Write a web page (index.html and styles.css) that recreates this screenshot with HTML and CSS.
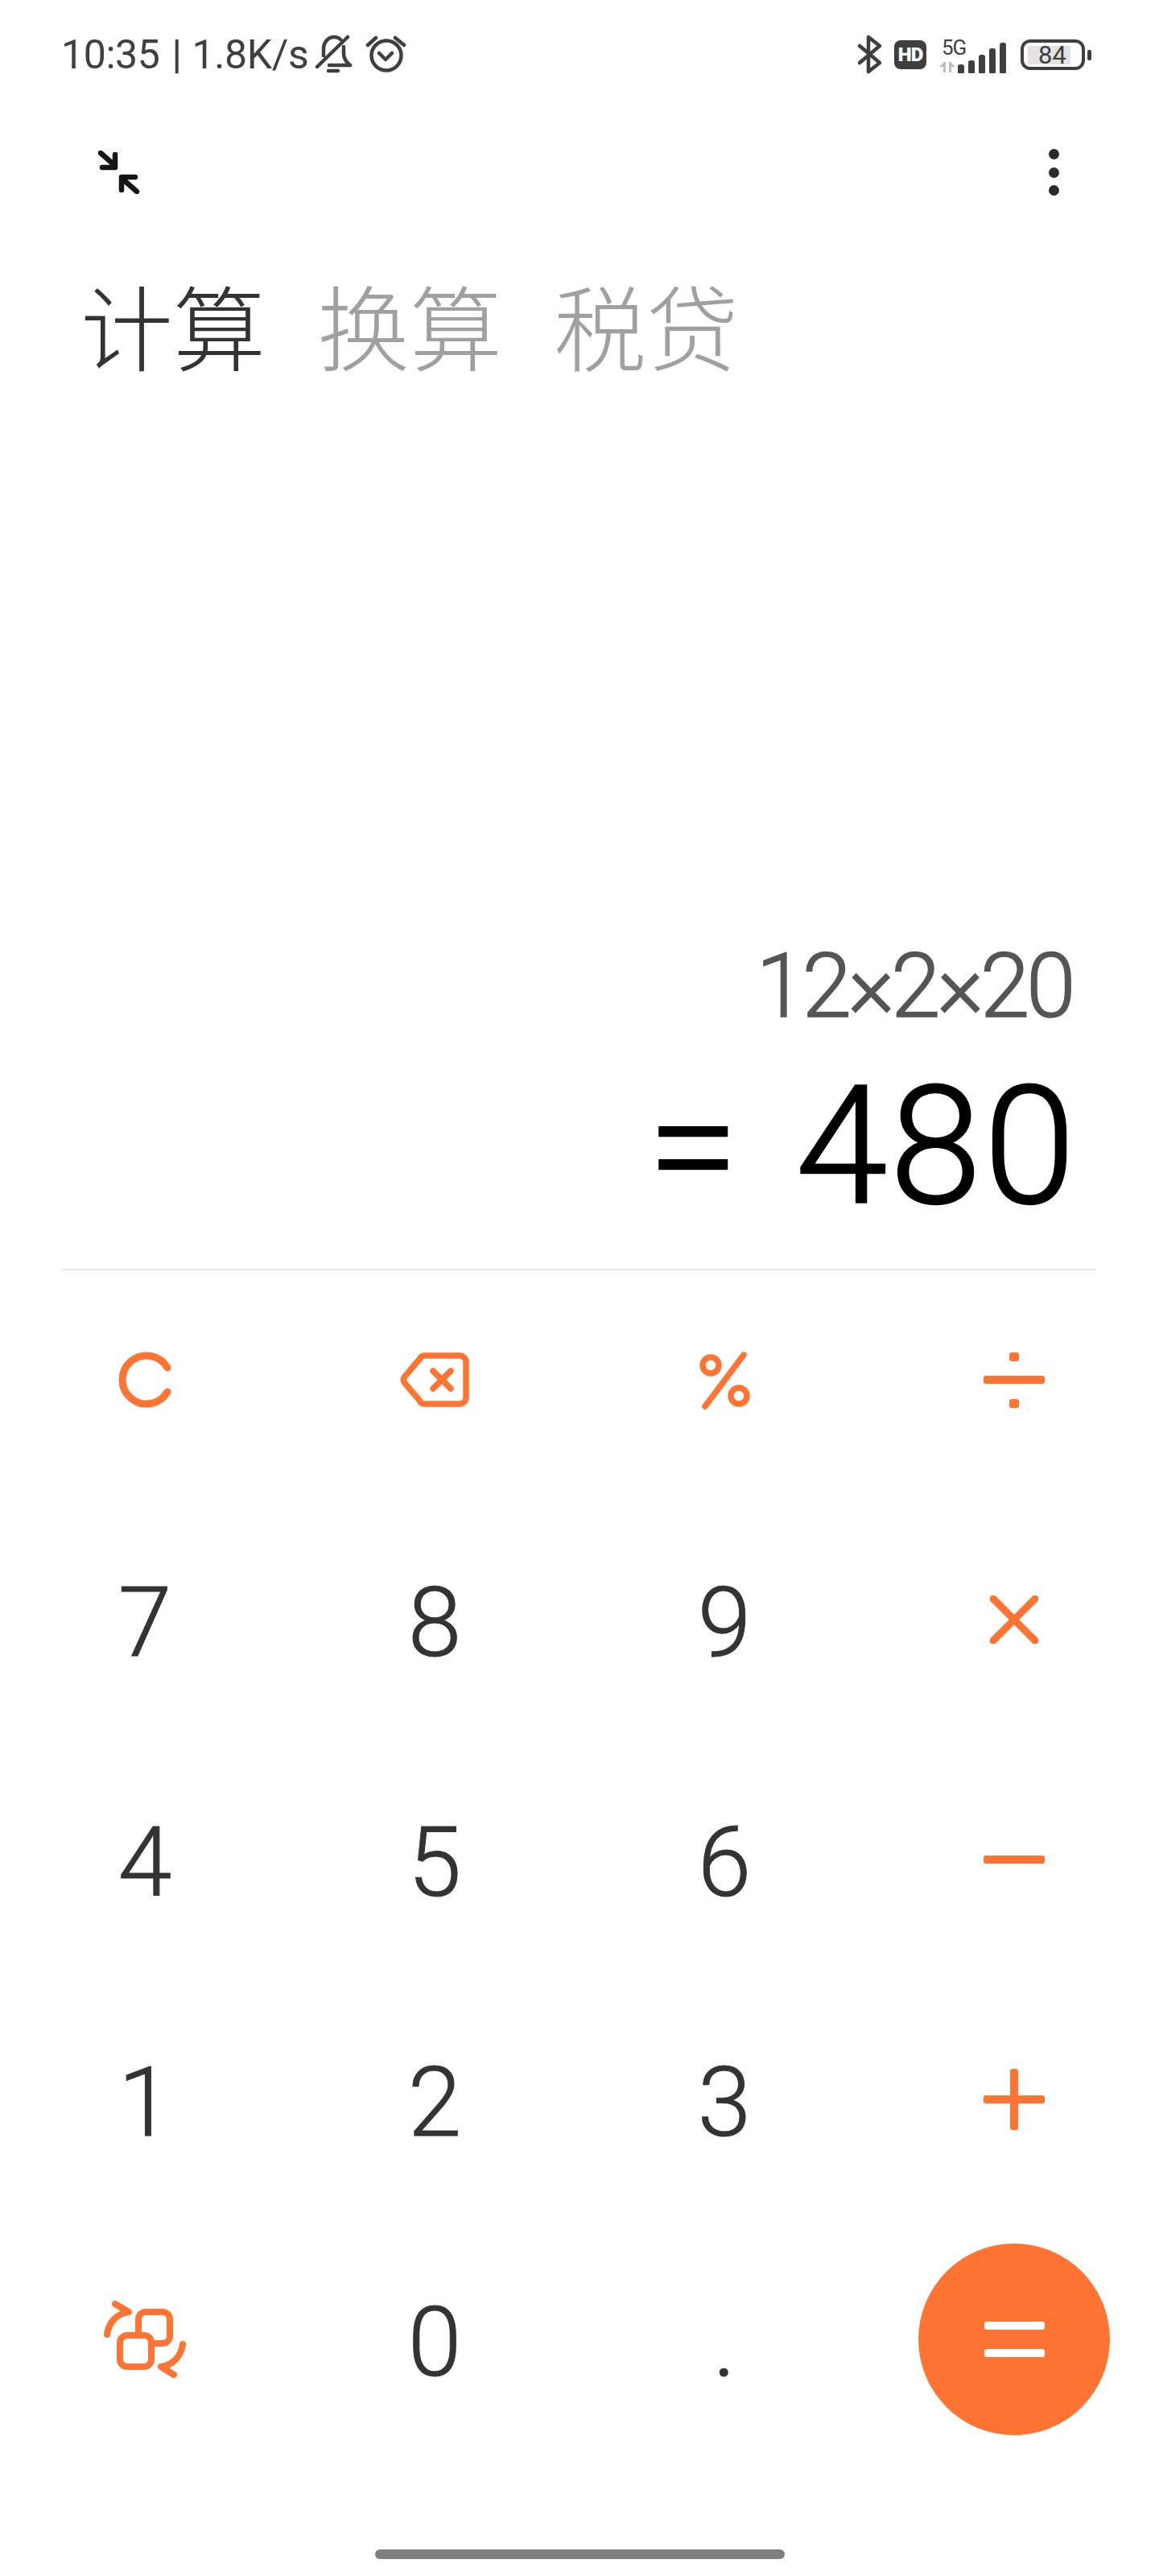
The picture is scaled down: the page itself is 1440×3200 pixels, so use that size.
FILE: index.html
```html
<!DOCTYPE html>
<html lang="zh-CN">
<head>
    <meta charset="UTF-8">
    <title>计算器</title>
    <meta name="viewport" content="width=device-width, initial-scale=1.0">
    <link rel="stylesheet" href="styles.css">
</head>
<body>

<div class="phone">
    <div class="statusbar">
        <div class="status-left">
            <span class="status-text">10:35<span class="status-sep">|</span>1.8K/s</span>
            <svg class="icon-bell" width="48" height="50" viewBox="0 0 48 50">
                <path d="M11 26V18C11 9 17 3 24 3C27 3 30 4 32 6M36 15V24C36 30 39 34 44 38H18M17 45H29M3 40L41 3"/>
            </svg>
            <svg class="icon-alarm" width="52" height="50" viewBox="0 0 52 50">
                <circle cx="26" cy="26" r="18.5"/>
                <path d="M17 23L25 31L33 23M3 13L13 4M37 4L48 13"/>
            </svg>
        </div>
        <div class="status-right">
            <svg class="icon-bt" width="36" height="52" viewBox="0 0 36 52">
                <path d="M5 15L30 36L16 47V4L30 15L5 36"/>
            </svg>
            <div class="hd">HD</div>
            <div class="network">
                <div class="net-type">
                    <span class="five-g">5G</span>
                    <svg width="22" height="16" viewBox="0 0 22 16">
                        <path class="arrow-grey" d="M1 8L7 2H9V15H6V8ZM21 8L15 2H13V15H16V8Z"/>
                    </svg>
                </div>
                <div class="signal">
                    <span class="bar bar-1"></span>
                    <span class="bar bar-2"></span>
                    <span class="bar bar-3"></span>
                    <span class="bar bar-4"></span>
                    <span class="bar bar-5"></span>
                </div>
            </div>
            <div class="battery">
                <div class="battery-body"><span class="battery-level">84</span></div>
                <div class="battery-nub"></div>
            </div>
        </div>
    </div>

    <div class="toolbar">
        <svg class="icon-compress" width="52" height="54" viewBox="0 0 52 54">
            <path d="M3 3L20 18M5 21H21V5"/>
            <path d="M48 51L31 36M29 33H46M29 33V49"/>
        </svg>
        <div class="more">
            <span></span>
            <span></span>
            <span></span>
        </div>
    </div>

    <div class="tabs">
        <div class="tab active">计算</div>
        <div class="tab">换算</div>
        <div class="tab">税贷</div>
    </div>

    <div class="display">
        <div class="expression">12×2×20</div>
        <div class="result"><span class="result-eq">=</span><span class="result-num">480</span></div>
    </div>

    <div class="divider"></div>

    <div class="keypad">
        <button class="key">
            <svg class="op-icon" width="70" height="76" viewBox="0 0 70 76">
                <path d="M63 23A30 30 0 1 0 63 53"/>
            </svg>
        </button>
        <button class="key">
            <svg class="op-icon thin" width="96" height="76" viewBox="0 0 96 76">
                <path d="M35 8H79a8 8 0 0 1 8 8V60a8 8 0 0 1-8 8H35a6 6 0 0 1-5.5-4L10 41a8 8 0 0 1 0-6L29.5 12a6 6 0 0 1 5.5-4z"/>
                <path d="M46 27L68 49M68 27L46 49"/>
            </svg>
        </button>
        <button class="key">
            <svg class="op-icon thin" width="76" height="76" viewBox="0 0 76 76">
                <circle cx="21" cy="20" r="10"/>
                <circle cx="56" cy="58" r="10"/>
                <path d="M14 71L62 7"/>
            </svg>
        </button>
        <button class="key">
            <svg width="76" height="70" viewBox="0 0 76 70">
                <rect class="op-fill" x="0" y="30" width="76" height="10" rx="3"/>
                <rect class="op-fill" x="32" y="1" width="12" height="11" rx="3"/>
                <rect class="op-fill" x="32" y="59" width="12" height="11" rx="3"/>
            </svg>
        </button>

        <button class="key digit">7</button>
        <button class="key digit">8</button>
        <button class="key digit">9</button>
        <button class="key">
            <svg class="op-icon" width="60" height="60" viewBox="0 0 60 60">
                <path d="M4 4L56 56M56 4L4 56"/>
            </svg>
        </button>

        <button class="key digit">4</button>
        <button class="key digit">5</button>
        <button class="key digit">6</button>
        <button class="key">
            <svg width="76" height="10" viewBox="0 0 76 10">
                <rect class="op-fill" width="76" height="10" rx="3"/>
            </svg>
        </button>

        <button class="key digit">1</button>
        <button class="key digit">2</button>
        <button class="key digit">3</button>
        <button class="key">
            <svg width="76" height="76" viewBox="0 0 76 76">
                <rect class="op-fill" y="33" width="76" height="10" rx="3"/>
                <rect class="op-fill" x="33" width="10" height="76" rx="3"/>
            </svg>
        </button>

        <button class="key">
            <svg class="op-icon swap" width="106" height="98" viewBox="0 0 106 98">
                <rect x="45" y="15" width="39" height="39" rx="9"/>
                <rect class="swap-front" x="22" y="44" width="39" height="39" rx="9"/>
                <path d="M6 43C8 28 18 17 33 15L16 5"/>
                <path d="M100 55C98 70 88 81 73 83L89 93"/>
            </svg>
        </button>
        <button class="key digit">0</button>
        <button class="key digit">.</button>
        <button class="key">
            <span class="equals">
                <span></span>
                <span></span>
            </span>
        </button>
    </div>

    <div class="home-bar"></div>
</div>

</body>
</html>
```

FILE: styles.css
```css
:root {
    --laranja: #ff7433;
    --escuro: #3f3f3f;
    --digito: #333333;
}

* {
    box-sizing: border-box;
}

body {
    margin: 0;
    padding: 0;
    background-color: #fff;
    font-family: Roboto, "Noto Sans CJK SC", sans-serif;
}

.phone {
    width: 1440px;
    height: 3200px;
    display: flex;
    flex-direction: column;
    background-color: #fff;
    overflow: hidden;
}

/* status bar */
.statusbar {
    height: 136px;
    padding: 0 84px 0 76px;
    display: flex;
    justify-content: space-between;
    align-items: center;
    color: var(--escuro);
}

.status-left,
.status-right {
    display: flex;
    align-items: center;
}

.status-text {
    font-size: 50px;
    line-height: 60px;
    letter-spacing: -0.4px;
}

.status-sep {
    margin: 0 13px 0 15px;
    font-weight: 500;
}

.statusbar svg {
    fill: none;
    stroke: var(--escuro);
    stroke-width: 4.5;
    stroke-linecap: round;
    stroke-linejoin: round;
}

.icon-bell {
    margin-left: 8px;
}

.icon-alarm {
    margin-left: 15px;
}

.hd {
    width: 40px;
    height: 36px;
    margin-left: 12px;
    border-radius: 8px;
    background-color: var(--escuro);
    color: #fff;
    font-size: 24px;
    font-weight: 900;
    line-height: 36px;
    text-align: center;
    letter-spacing: -1px;
}

.network {
    margin-left: 15px;
    display: flex;
    align-items: flex-end;
}

.net-type {
    width: 24px;
    display: flex;
    flex-direction: column;
    align-items: flex-start;
}

.five-g {
    margin-left: 4px;
    font-size: 26px;
    line-height: 26px;
    letter-spacing: -1px;
    white-space: nowrap;
}

.statusbar .net-type svg {
    stroke: none;
    margin-top: 3px;
}

.arrow-grey {
    fill: #bdbdbd;
}

.signal {
    display: flex;
    align-items: flex-end;
    gap: 5px;
}

.bar {
    width: 8px;
    background-color: var(--escuro);
    border-radius: 3px 3px 1px 1px;
}

.bar-1 { height: 11px; }
.bar-2 { height: 16px; }
.bar-3 { height: 23px; }
.bar-4 { height: 31px; }
.bar-5 { height: 38px; }

.battery {
    margin-left: 18px;
    display: flex;
    align-items: center;
    gap: 3px;
}

.battery-body {
    width: 80px;
    height: 38px;
    padding: 4px 0 0 5px;
    border: 4px solid var(--escuro);
    border-radius: 12px;
}

.battery-level {
    display: block;
    width: 53px;
    height: 23px;
    background-color: #e3e3e3;
    font-size: 31px;
    line-height: 23px;
    text-align: center;
    padding-left: 8px;
}

.battery-nub {
    width: 5px;
    height: 13px;
    border-radius: 2px;
    background-color: var(--escuro);
}

/* top actions */
.toolbar {
    height: 156px;
    padding: 0 124px 0 122px;
    display: flex;
    justify-content: space-between;
    align-items: center;
}

.icon-compress {
    fill: none;
    stroke: #161616;
    stroke-width: 6.5;
    stroke-linecap: round;
    stroke-linejoin: round;
}

.more {
    display: flex;
    flex-direction: column;
    gap: 9.5px;
}

.more span {
    width: 13px;
    height: 13px;
    border-radius: 50%;
    background-color: #2a2a2a;
}

/* tabs */
.tabs {
    margin-top: 52px;
    padding-left: 100px;
    display: flex;
    gap: 64px;
}

.tab {
    font-family: "Noto Sans CJK SC", sans-serif;
    font-size: 115px;
    font-weight: 300;
    line-height: 116px;
    color: #a0a0a0;
}

.tab.active {
    color: var(--digito);
}

/* display */
.display {
    flex: 1;
    padding: 0 101px 49px 0;
    display: flex;
    flex-direction: column;
    justify-content: flex-end;
    align-items: flex-end;
    font-weight: 300;
}

.expression {
    margin-bottom: 41px;
    margin-right: 7px;
    font-size: 111px;
    line-height: 111px;
    letter-spacing: -4.5px;
    color: #555;
    -webkit-text-stroke: 1.5px #555;
}

.result {
    display: flex;
    gap: 71px;
    font-size: 205px;
    line-height: 205px;
    color: #000;
    -webkit-text-stroke: 2.5px #000;
}

.result-num {
    letter-spacing: 3px;
}

.divider {
    height: 2px;
    margin: 0 78px;
    background-color: #e6e6e6;
}

/* keypad */
.keypad {
    display: grid;
    grid-template-columns: repeat(4, 360px);
    grid-auto-rows: 272px;
    row-gap: 26px;
}

.key {
    padding: 0;
    border: none;
    background: none;
    display: flex;
    justify-content: center;
    align-items: center;
    font-family: inherit;
}

.digit {
    padding-top: 8px;
    font-size: 120px;
    font-weight: 300;
    line-height: 120px;
    color: var(--digito);
    -webkit-text-stroke: 1px var(--digito);
}

.op-icon {
    fill: none;
    stroke: var(--laranja);
    stroke-width: 9;
    stroke-linecap: round;
    stroke-linejoin: round;
}

.op-icon.thin {
    stroke-width: 7.5;
}

.op-icon.swap {
    stroke-width: 8;
    overflow: visible;
}

.swap-front {
    fill: #fff;
}

.op-fill {
    fill: var(--laranja);
}

.equals {
    width: 238px;
    height: 238px;
    border-radius: 50%;
    background-color: var(--laranja);
    display: flex;
    flex-direction: column;
    justify-content: center;
    align-items: center;
    gap: 24px;
}

.equals span {
    width: 75px;
    height: 10px;
    border-radius: 3px;
    background-color: #fff;
}

.home-bar {
    width: 509px;
    height: 12px;
    margin: 125px auto 21px;
    border-radius: 6px;
    background-color: #7f7f7f;
}
```
